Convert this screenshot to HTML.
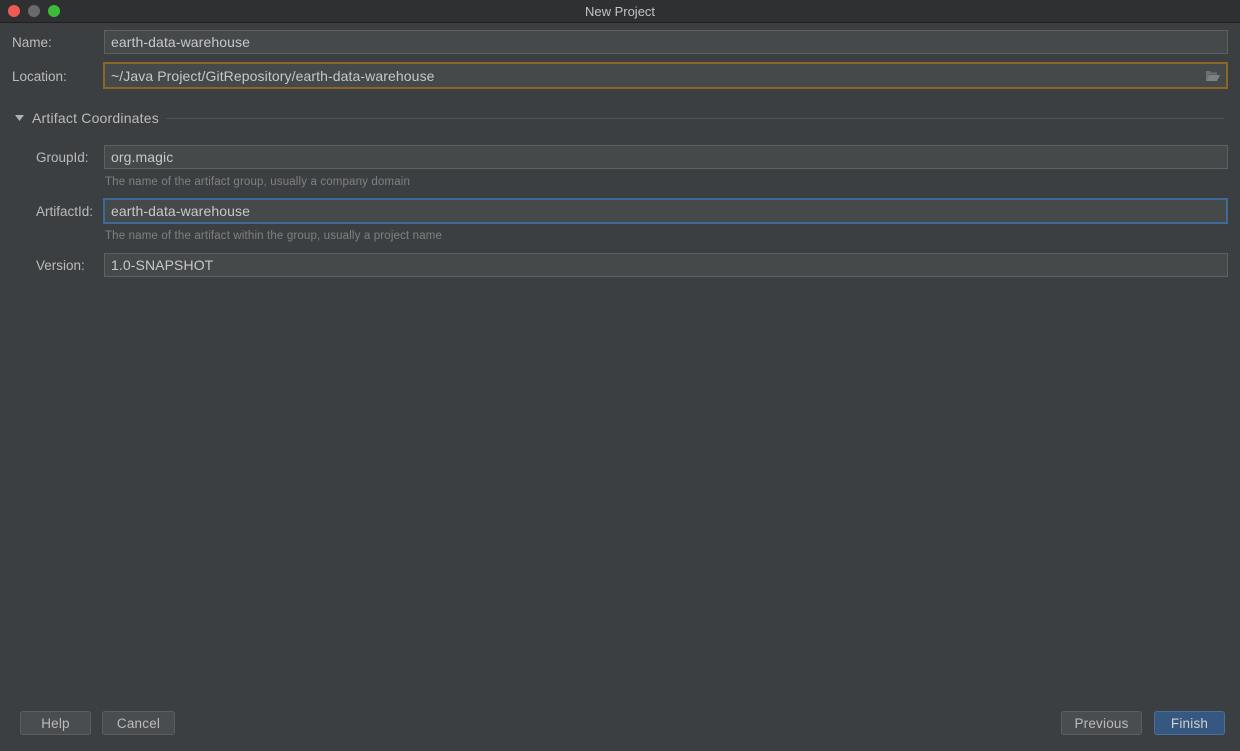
<!DOCTYPE html>
<html><head><style>
body{margin:0;width:1240px;height:751px;background:#3c3f41;font-family:"Liberation Sans",sans-serif;font-size:14px;color:#bbbbbb;position:relative;overflow:hidden}
.t{position:absolute;left:0;top:0;width:1240px;height:22px;background:#2e3031;border-bottom:1px solid #1f2021;text-align:center;line-height:23px;color:#c4c4c4;font-size:13px}
.d{position:absolute;top:5px;width:12px;height:12px;border-radius:50%}
.l{position:absolute;color:#bbbbbb;font-size:13.5px}
.f{position:absolute;left:104px;width:1124px;background:#45494a;border:1px solid #5e6163;color:#c8c8c8;box-sizing:border-box;padding-left:6px;font-size:14px;letter-spacing:0.1px}
.h{position:absolute;left:105px;font-size:11.5px;letter-spacing:0.15px;color:#808080}
.b{position:absolute;top:711px;height:24px;background:#4a4d4f;border:1px solid #5b5e60;border-radius:3px;box-sizing:border-box;text-align:center;line-height:23px;color:#bbbbbb;font-size:13.5px;letter-spacing:0.2px}
</style></head><body>
<div class="t">New Project</div>
<div class="d" style="left:8px;background:#ee5b53"></div>
<div class="d" style="left:28px;background:#6a6a6a"></div>
<div class="d" style="left:48px;background:#3fbb3b"></div>
<div class="l" style="left:12px;top:35px">Name:</div>
<div class="f" style="top:30px;height:24px;line-height:23px">earth-data-warehouse</div>
<div class="l" style="left:12px;top:69px">Location:</div>
<div class="f" style="top:62px;height:27px;line-height:24px;border:2px solid #8c6625;left:103px;width:1125px">~/Java Project/GitRepository/earth-data-warehouse
<svg style="position:absolute;right:6px;top:6px" width="15" height="12" viewBox="0 0 15 12"><path d="M1 1h4l1 1.5h6v2H4L1 11z" fill="#6c7173"/><path d="M4 5h11l-3 6H1z" fill="#7b8184"/></svg></div>
<svg style="position:absolute;left:15px;top:115px" width="9" height="6"><path d="M0 0h9L4.5 6z" fill="#b0b0b0"/></svg>
<div class="l" style="left:32px;top:110px;font-size:14px;letter-spacing:0.2px">Artifact Coordinates</div>
<div style="position:absolute;left:166px;top:118px;width:1058px;height:1px;background:#505355"></div>
<div class="l" style="left:36px;top:150px">GroupId:</div>
<div class="f" style="top:145px;height:24px;line-height:23px">org.magic</div>
<div class="h" style="top:176px">The name of the artifact group, usually a company domain</div>
<div class="l" style="left:36px;top:204px">ArtifactId:</div>
<div class="f" style="top:198px;height:26px;line-height:23px;border:2px solid #3d6a96;left:103px;width:1125px">earth-data-warehouse</div>
<div class="h" style="top:230px">The name of the artifact within the group, usually a project name</div>
<div class="l" style="left:36px;top:258px">Version:</div>
<div class="f" style="top:253px;height:24px;line-height:23px">1.0-SNAPSHOT</div>
<div class="b" style="left:20px;width:71px">Help</div>
<div class="b" style="left:102px;width:73px">Cancel</div>
<div class="b" style="left:1061px;width:81px">Previous</div>
<div class="b" style="left:1154px;width:71px;background:#365880;border-color:#4c6f96;color:#d0d0d0">Finish</div>
</body></html>
